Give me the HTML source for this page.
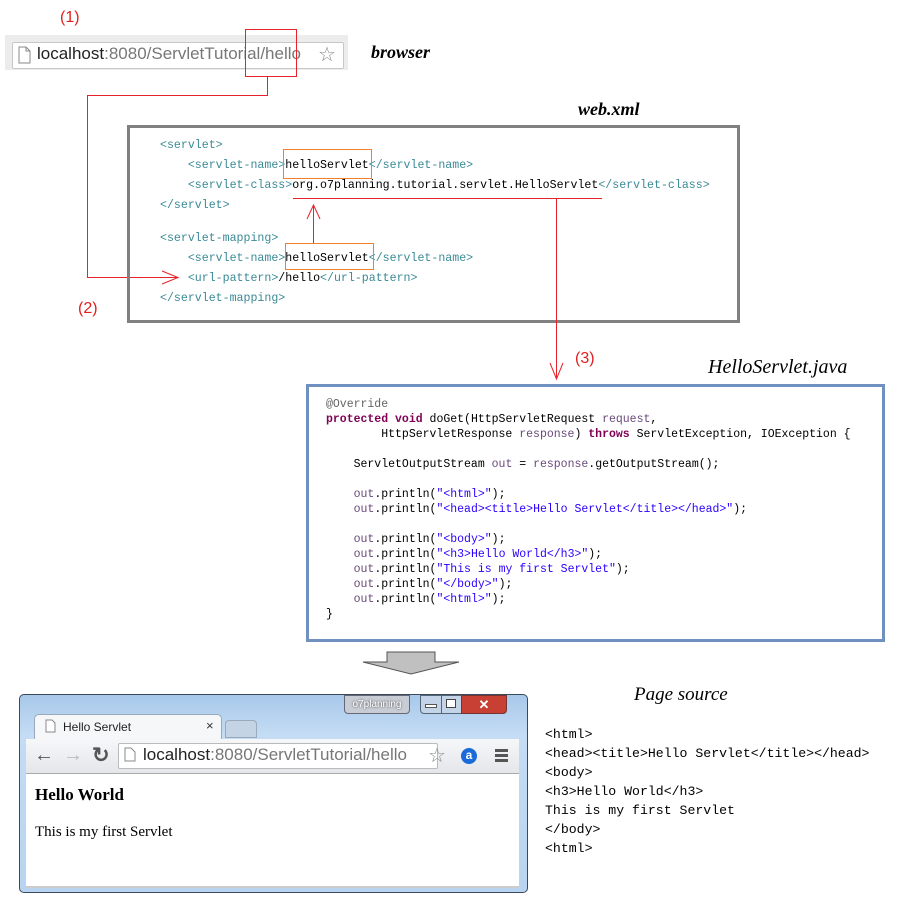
<!DOCTYPE html>
<html><head><meta charset="utf-8"><style>
body{margin:0;width:900px;height:897px;background:#fff;position:relative;overflow:hidden;font-family:"Liberation Sans",sans-serif}
.a{position:absolute;white-space:pre}
.m{font-family:"Liberation Mono",monospace;font-size:11.6px}
.t{color:#3a8a96}
.k{color:#7f0055;font-weight:bold}
.s{color:#2a00ff}
.v{color:#6a4a7a}
.lbl{font-family:"Liberation Serif",serif;font-style:italic;font-weight:bold;color:#000}
.red{color:#e02020}
.ln{position:absolute;background:#e8222a}
</style></head><body>
<div class="a" style="left:5px;top:35px;width:343px;height:35px;background:#ececec"></div>
<div class="a" style="left:12px;top:42px;width:330px;height:25px;background:#fff;border:1px solid #c8c8c8;border-radius:2px"></div>
<svg class="a" style="left:17px;top:46px" width="14" height="18"><path d="M2 1h7l4 4v12H2z M9 1v4h4" fill="#fff" stroke="#888"/></svg>
<div class="a" style="left:37px;top:44px;font-size:17px;color:#222">localhost<span style="color:#777">:8080/ServletTutorial/hello</span></div>
<div class="a" style="left:318px;top:42px;font-size:20px;color:#888">☆</div>
<div class="a" style="left:245px;top:29px;width:50px;height:46px;border:1px solid #e8222a"></div>
<div class="a red" style="left:60px;top:9px;font-size:16px">(1)</div>
<div class="a lbl" style="left:371px;top:42px;font-size:18px">browser</div>
<div class="a lbl" style="left:578px;top:99px;font-size:18px">web.xml</div>
<div class="ln" style="left:267px;top:76px;width:1px;height:20px"></div>
<div class="ln" style="left:87px;top:95px;width:181px;height:1px"></div>
<div class="ln" style="left:87px;top:95px;width:1px;height:183px"></div>
<div class="ln" style="left:87px;top:277px;width:90px;height:1px"></div>
<svg class="a" style="left:160px;top:270px" width="20" height="15"><path d="M2 1l16 6.5L2 14" fill="none" stroke="#e8222a"/></svg>
<div class="a red" style="left:78px;top:300px;font-size:16px">(2)</div>
<div class="a" style="left:127px;top:125px;width:607px;height:192px;border:3px solid #808080"></div>
<div class="a m" style="left:160px;top:136px;line-height:20px"><span class="t">&lt;servlet&gt;</span>
    <span class="t">&lt;servlet-name&gt;</span>helloServlet<span class="t">&lt;/servlet-name&gt;</span>
    <span class="t">&lt;servlet-class&gt;</span>org.o7planning.tutorial.servlet.HelloServlet<span class="t">&lt;/servlet-class&gt;</span>
<span class="t">&lt;/servlet&gt;</span></div>
<div class="a m" style="left:160px;top:229px;line-height:20px"><span class="t">&lt;servlet-mapping&gt;</span>
    <span class="t">&lt;servlet-name&gt;</span>helloServlet<span class="t">&lt;/servlet-name&gt;</span>
    <span class="t">&lt;url-pattern&gt;</span>/hello<span class="t">&lt;/url-pattern&gt;</span>
<span class="t">&lt;/servlet-mapping&gt;</span></div>
<div class="a" style="left:283px;top:149px;width:87px;height:28px;border:1px solid #f08030"></div>
<div class="a" style="left:285px;top:243px;width:87px;height:25px;border:1px solid #f08030"></div>
<div class="ln" style="left:293px;top:198px;width:309px;height:1px"></div>
<div class="ln" style="left:313px;top:206px;width:1px;height:37px"></div>
<svg class="a" style="left:306px;top:204px" width="15" height="16"><path d="M1 15L7.5 1L14 15" fill="none" stroke="#e8222a"/></svg>
<div class="ln" style="left:556px;top:199px;width:1px;height:180px"></div>
<svg class="a" style="left:549px;top:362px" width="15" height="18"><path d="M1 1L7.5 17L14 1" fill="none" stroke="#e8222a"/></svg>
<div class="a red" style="left:575px;top:350px;font-size:16px">(3)</div>
<div class="a lbl" style="left:708px;top:356px;font-size:20px;font-weight:normal">HelloServlet.java</div>
<div class="a" style="left:306px;top:384px;width:573px;height:252px;border:3px solid #7090c0"></div>
<div class="a m" style="left:326px;top:397px;line-height:15px;font-size:11.5px"><span style="color:#646464">@Override</span>
<span class="k">protected</span> <span class="k">void</span> doGet(HttpServletRequest <span class="v">request</span>,
        HttpServletResponse <span class="v">response</span>) <span class="k">throws</span> ServletException, IOException {

    ServletOutputStream <span class="v">out</span> = <span class="v">response</span>.getOutputStream();

    <span class="v">out</span>.println(<span class="s">"&lt;html&gt;"</span>);
    <span class="v">out</span>.println(<span class="s">"&lt;head&gt;&lt;title&gt;Hello Servlet&lt;/title&gt;&lt;/head&gt;"</span>);

    <span class="v">out</span>.println(<span class="s">"&lt;body&gt;"</span>);
    <span class="v">out</span>.println(<span class="s">"&lt;h3&gt;Hello World&lt;/h3&gt;"</span>);
    <span class="v">out</span>.println(<span class="s">"This is my first Servlet"</span>);
    <span class="v">out</span>.println(<span class="s">"&lt;/body&gt;"</span>);
    <span class="v">out</span>.println(<span class="s">"&lt;html&gt;"</span>);
}</div>
<svg class="a" style="left:362px;top:650px" width="100" height="26"><path d="M25 2h48v10h24L49 24L1 12h24z" fill="#c0c0c0" stroke="#555"/></svg>
<div class="a" style="left:19px;top:694px;width:507px;height:197px;border:1px solid #3a4a5a;border-radius:5px;background:linear-gradient(#a8c8ea,#c4dcf4 40px,#b8d4f0)"></div>
<div class="a" style="left:344px;top:695px;width:64px;height:17px;background:#c8ccd4;border:1px solid #667;border-radius:0 0 4px 4px;font-size:10px;text-align:center;line-height:17px;color:#fff;text-shadow:0 0 2px #333">o7planning</div>
<div class="a" style="left:420px;top:695px;width:20px;height:17px;background:#c4d4e8;border:1px solid #567;border-radius:0 0 0 4px"></div>
<div class="a" style="left:425px;top:704px;width:10px;height:2px;background:#fff;border:1px solid #555"></div>
<div class="a" style="left:441px;top:695px;width:19px;height:17px;background:#c4d4e8;border:1px solid #567"></div>
<div class="a" style="left:446px;top:699px;width:8px;height:7px;border:1px solid #444;background:#fff"></div>
<div class="a" style="left:461px;top:695px;width:44px;height:17px;background:#c84034;border:1px solid #733;border-radius:0 0 4px 0;color:#fff;text-align:center;font-size:13px;font-weight:bold;line-height:17px">✕</div>
<div class="a" style="left:34px;top:714px;width:186px;height:26px;background:#f6f7f9;border:1px solid #9ab;border-bottom:none;border-radius:5px 5px 0 0"></div>
<svg class="a" style="left:45px;top:719px" width="11" height="14"><path d="M1 1h6l3 3v9H1z" fill="#fff" stroke="#888"/></svg>
<div class="a" style="left:63px;top:720px;font-size:12px;color:#222">Hello Servlet</div>
<div class="a" style="left:206px;top:718px;font-size:13px;color:#333">×</div>
<div class="a" style="left:225px;top:720px;width:30px;height:16px;background:#c4d4e4;border:1px solid #9ab;border-radius:4px 4px 0 0"></div>
<div class="a" style="left:26px;top:739px;width:493px;height:34px;background:linear-gradient(#f6f7f9,#e4e6ea);border-bottom:1px solid #aaa"></div>
<div class="a" style="left:34px;top:744px;font-size:20px;color:#555;font-weight:bold">←</div>
<div class="a" style="left:63px;top:744px;font-size:20px;color:#bbb;font-weight:bold">→</div>
<div class="a" style="left:92px;top:743px;font-size:21px;color:#555;font-weight:bold">↻</div>
<div class="a" style="left:118px;top:743px;width:318px;height:24px;background:#fff;border:1px solid #bbb;border-radius:2px"></div>
<svg class="a" style="left:124px;top:747px" width="12" height="15"><path d="M1 1h6l4 4v9H1z" fill="#fff" stroke="#888"/></svg>
<div class="a" style="left:143px;top:745px;font-size:17px;color:#222">localhost<span style="color:#777">:8080/ServletTutorial/hello</span></div>
<div class="a" style="left:428px;top:743px;font-size:20px;color:#888">☆</div>
<div class="a" style="left:461px;top:748px;width:16px;height:16px;border-radius:50%;background:#1a6ad8;color:#fff;font-size:12px;font-weight:bold;text-align:center;line-height:15px">a</div>
<div class="a" style="left:495px;top:749px;width:13px;height:3px;background:#555;box-shadow:0 5px 0 #555,0 10px 0 #555"></div>
<div class="a" style="left:26px;top:774px;width:493px;height:112px;background:#fff;border-bottom:2px solid #ccc"></div>
<div class="a" style="left:35px;top:785px;font-family:'Liberation Serif',serif;font-weight:bold;font-size:17px">Hello World</div>
<div class="a" style="left:35px;top:824px;font-family:'Liberation Serif',serif;font-size:15px">This is my first Servlet</div>
<div class="a lbl" style="left:634px;top:684px;font-size:19px;font-weight:normal">Page source</div>
<div class="a" style="left:545px;top:725px;font-family:'Liberation Mono',monospace;font-size:13.2px;line-height:19px">&lt;html&gt;
&lt;head&gt;&lt;title&gt;Hello Servlet&lt;/title&gt;&lt;/head&gt;
&lt;body&gt;
&lt;h3&gt;Hello World&lt;/h3&gt;
This is my first Servlet
&lt;/body&gt;
&lt;html&gt;</div>
</body></html>
